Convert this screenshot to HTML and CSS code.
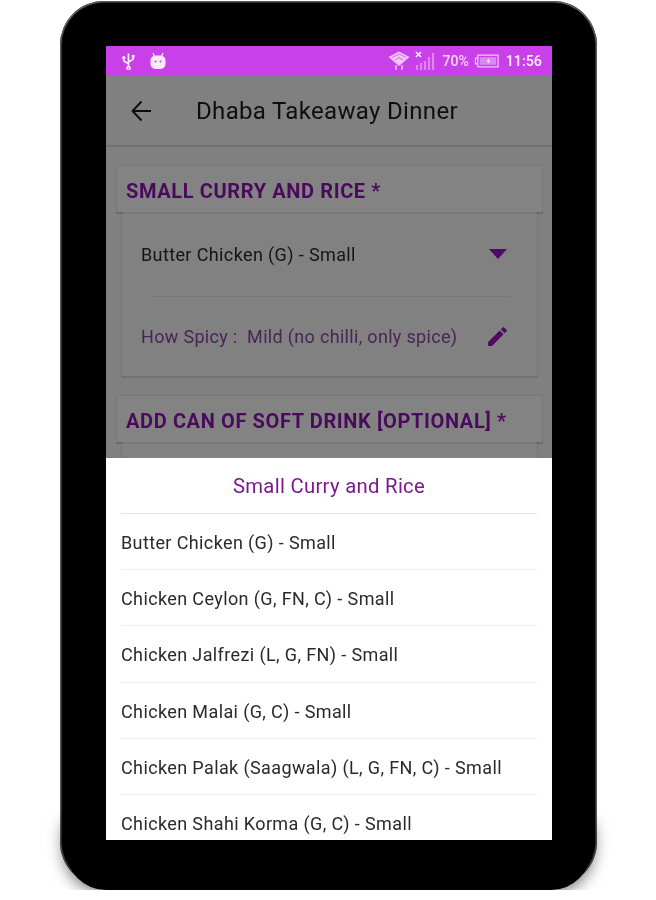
FILE: index.html
```html
<!DOCTYPE html>
<html lang="en">
<head>
<meta charset="utf-8">
<title>Dhaba Takeaway Dinner</title>
<link rel="stylesheet" href="styles.css">
</head>
<body>
<div class="device">
  <div class="screen">
    <div class="statusbar">
      <div class="status-left">
        <svg class="ic-usb" viewBox="0 0 16 18"><path d="M8 1v14M8 15a1.600 1.600 0 1 0 .01 0M8 12 3 9V6M8 10l5-3V4" fill="none" stroke="#fbe9ff" stroke-width="1.800"/><circle cx="3" cy="5.500" r="1.800" fill="#fbe9ff"/><rect x="11.500" y="2.500" width="3" height="3" fill="#fbe9ff"/></svg>
        <svg class="ic-cat" viewBox="0 0 16 18"><path d="M3 1 4.500 4.500M13 1 11.500 4.500" stroke="#fbe9ff" stroke-width="1.200"/><rect x="0.500" y="3.500" width="15" height="13.500" rx="5" fill="#fbe9ff"/><circle cx="5.500" cy="9.500" r="1" fill="#c93fe8"/><circle cx="10.500" cy="9.500" r="1" fill="#c93fe8"/></svg>
      </div>
      <div class="status-right">
        <svg class="ic-wifi" viewBox="0 0 22 20"><path d="M0.500 6 11 0.500 21.500 6 11 15z" fill="#f3c6fb"/><path d="M4 6.500 11 3l7 3.500M7 9l4-2.500 4 2.500" fill="none" stroke="#d565ee" stroke-width="1"/><path d="M8 14v5M14 14v5" stroke="#e79af6" stroke-width="2"/></svg>
        <svg class="ic-signal" viewBox="0 0 20 20"><path d="M1 1l5 5M6 1 1 6" stroke="#fbe9ff" stroke-width="1.700"/><path d="M2 19v-5M6 19v-7M10 19V10M14 19V6M18 19V2" stroke="#dc86f2" stroke-width="2.200"/></svg>
        <span class="pct">70%</span>
        <svg class="ic-batt" viewBox="0 0 26 14"><path d="M4 1h21v12H4zM4 4H1.500v6H4" fill="none" stroke="#f3c6fb" stroke-width="1.300"/><rect x="6" y="3" width="17" height="8" fill="#dc86f2"/><path d="M16 3.500l-3 4h2l-1 3 3-4h-2z" fill="#fff"/></svg>
        <span class="clock">11:56</span>
      </div>
    </div>
    <div class="appbar">
      <svg class="ic-back" viewBox="0 0 24 24"><path d="M21 12H3.500M11.500 2.500 2.500 12l9 9.500" fill="none" stroke="#0c0c0c" stroke-width="1.900"/></svg>
      <span class="title">Dhaba Takeaway Dinner</span>
    </div>
    <div class="form">
      <div class="section-head"><span>SMALL CURRY AND RICE *</span></div>
      <div class="card">
        <div class="row row-select">
          <span class="value">Butter Chicken (G) - Small</span>
          <svg class="ic-caret" viewBox="0 0 18 10"><path d="M0 0h18L9 10z" fill="#4f0a63"/></svg>
        </div>
        <div class="row row-spicy">
          <span class="spicy">How Spicy :&nbsp; Mild (no chilli, only spice)</span>
          <svg class="ic-pen" viewBox="0 0 24 24"><path d="M3 17.250V21h3.750L17.810 9.940l-3.750-3.750L3 17.250zM20.710 7.040a1 1 0 0 0 0-1.410l-2.340-2.340a1 1 0 0 0-1.410 0l-1.830 1.830 3.750 3.750 1.830-1.830z" fill="#4f0a63"/></svg>
        </div>
      </div>
      <div class="section-head section-second"><span>ADD CAN OF SOFT DRINK [OPTIONAL] *</span></div>
      <div class="card card-cut"></div>
    </div>
    <div class="sheet">
      <div class="sheet-title">Small Curry and Rice</div>
      <ul class="options">
        <li>Butter Chicken (G) - Small</li>
        <li>Chicken Ceylon (G, FN, C) - Small</li>
        <li>Chicken Jalfrezi (L, G, FN) - Small</li>
        <li>Chicken Malai (G, C) - Small</li>
        <li>Chicken Palak (Saagwala) (L, G, FN, C) - Small</li>
        <li>Chicken Shahi Korma (G, C) - Small</li>
      </ul>
    </div>
  </div>
</div>
</body>
</html>
```
FILE: styles.css
```css
* { box-sizing: border-box; }
html, body { margin: 0; padding: 0; background: #fff; }
body { width: 656px; height: 900px; overflow: hidden; font-family: Roboto, "Liberation Sans", sans-serif; }

.device {
  position: relative;
  z-index: 0;
  width: 537px;
  height: 885px;
  margin: 1px 0 0 60px;
  padding: 45px 45px 46px 46px;
  background: #000;
  border-radius: 44px;
  box-shadow: inset 0 0 1px 1.500px #606060;
}
/* soft drop shadow: only below the device and around its lower corners */
.device::before {
  content: "";
  position: absolute;
  z-index: -1;
  left: 6px;
  right: 6px;
  bottom: -4px;
  height: 64px;
  border-radius: 0 0 40px 40px;
  background: #000;
  box-shadow: 0 0 16px 2px rgba(0,0,0,.6);
  clip-path: inset(-40px -40px 0 -40px);
}
.screen {
  position: relative;
  width: 446px;
  height: 794px;
  overflow: hidden;
  background: #808080;
  display: flex;
  flex-direction: column;
  filter: blur(.35px);
}

.statusbar {
  flex: none;
  height: 30px;
  background: #c93fe8;
  display: flex;
  align-items: center;
  justify-content: space-between;
  padding: 0 10px 0 15px;
}
.status-left, .status-right { display: flex; align-items: center; }
.ic-usb { width: 15px; height: 18px; }
.ic-cat { width: 16px; height: 18px; margin-left: 14px; margin-top: -1px; }
.ic-wifi { width: 22px; height: 20px; margin-left: -2px; }
.ic-signal { width: 20px; height: 20px; margin-left: 5px; margin-top: -1px; }
.pct { margin-left: 7px; font-size: 14px; font-weight: 500; color: #f6d5fc; }
.ic-batt { width: 25px; height: 14px; margin-left: 5px; }
.clock { margin-left: 7px; font-size: 14.300px; font-weight: 500; color: #fdf2ff; }

.appbar {
  flex: none;
  height: 71px;
  display: flex;
  align-items: center;
  padding: 1px 0 0 24px;
  border-bottom: 2px solid #727272;
}
.ic-back { width: 24px; height: 24px; }
.title { margin-left: 42px; font-size: 24px; letter-spacing: .33px; color: #0e0e0e; }

.form { flex: none; padding: 18px 9px 0 10px; }
.section-head {
  position: relative;
  height: 49px;
  display: flex;
  align-items: center;
  padding: 3px 0 0 9px;
  background: #838383;
  border: 1px solid #787878;
  border-bottom-width: 2px;
}
.section-head::before,
.section-head::after {
  content: "";
  position: absolute;
  bottom: -2px;
  width: 7px;
  height: 2px;
  background: #6b6b6b;
}
.section-head::before { left: -1px; }
.section-head::after { right: -1px; }
.section-head span { font-size: 20px; font-weight: 700; letter-spacing: .62px; color: #4a0a5c; white-space: nowrap; }
.card {
  margin: 0 5px;
  background: #818181;
  border-left: 1px solid #767676;
  border-right: 1px solid #767676;
  border-bottom: 2px solid #727272;
}
.row { display: flex; align-items: center; justify-content: space-between; }
.row-select { height: 83px; margin: 0 27px 0 30px; border-bottom: 1px solid #777; }
.row-select .value { margin-left: -11px; margin-top: -2px; }
.row-spicy { height: 79px; padding: 0 27px 0 19px; }
.value { font-size: 18px; letter-spacing: .38px; color: #151515; white-space: nowrap; }
.spicy { font-size: 18px; letter-spacing: .32px; color: #4b2456; white-space: nowrap; }
.ic-caret { width: 18px; height: 10px; margin-right: 3px; margin-top: -2px; }
.ic-pen { width: 25px; height: 25px; }
.section-second { margin-top: 17px; }
.card-cut { height: 20px; }

.sheet {
  position: absolute;
  left: 0;
  right: 0;
  bottom: 0;
  height: 382px;
  background: #fff;
  padding: 0 15px;
  overflow: hidden;
}
.sheet-title {
  height: 56px;
  line-height: 56px;
  text-align: center;
  font-size: 20.300px;
  letter-spacing: .3px;
  color: #7b1a8f;
  border-bottom: 1px solid #e4e4e4;
}
.options { list-style: none; margin: 0; padding: 0; }
.options li {
  height: 56.200px;
  padding-top: 1px;
  line-height: 56px;
  font-size: 18px;
  letter-spacing: .38px;
  color: #2a2a2a;
  white-space: nowrap;
  border-bottom: 1px solid #efefef;
}
```
